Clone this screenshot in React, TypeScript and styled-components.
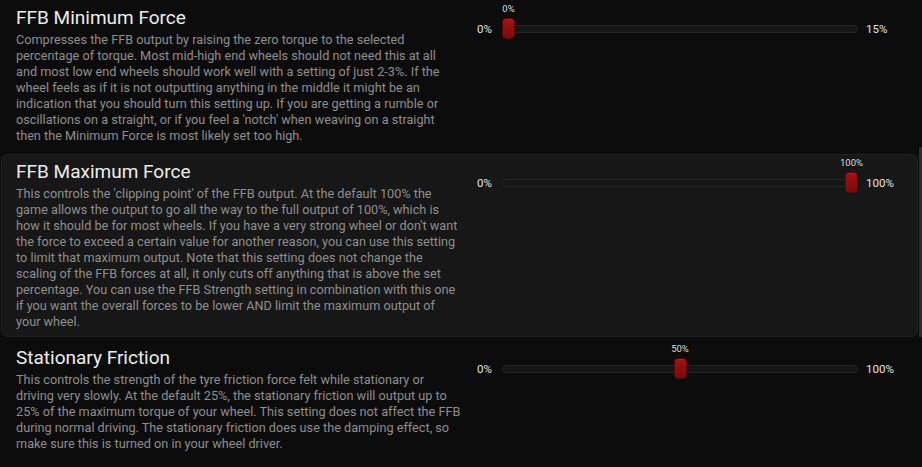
import React from "react";
import styled, { createGlobalStyle } from "styled-components";

const GlobalStyle = createGlobalStyle`
  html, body { margin: 0; padding: 0; background: #0c0c0c; }
  body { font-family: Roboto, "Liberation Sans", sans-serif; }
  #root { height: 467px; overflow: hidden; }
`;

const Page = styled.div`
  display: flex;
  height: 467px;
  background: #0c0c0c;
`;

const List = styled.div`
  width: 918px;
  display: flex;
  flex-direction: column;
`;

const ScrollTrack = styled.div`
  width: 3px;
  margin-left: 1px;
  display: flex;
  flex-direction: column;
`;

const ScrollThumb = styled.div`
  margin-top: 147px;
  height: 190px;
  background: #2c2c2c;
  border-radius: 1px;
`;

const Section = styled.div<{ $active?: boolean; $gap: number }>`
  display: grid;
  grid-template-columns: 447px 1fr;
  column-gap: 14px;
  align-items: start;
  padding: 6px 0 ${(p) => (p.$active ? "6px" : "8px")} 14px;
  margin: ${(p) => p.$gap}px 0 0 1px;
  border: 1px solid ${(p) => (p.$active ? "#212121" : "transparent")};
  border-radius: 7px;
  background: ${(p) => (p.$active ? "#171717" : "transparent")};
`;

const TextCol = styled.div`
  display: flex;
  flex-direction: column;
  white-space: nowrap;
`;

const Title = styled.h2`
  margin: 0;
  font-family: Roboto, "Liberation Sans", sans-serif;
  font-weight: 400;
  font-size: 19px;
  line-height: 22px;
  color: #ececec;
`;

const Body = styled.p`
  margin: 3px 0 0;
  font-size: 12.7px;
  line-height: 16px;
  color: #8e8e8e;
`;

const SliderRow = styled.div`
  display: flex;
  align-items: center;
  height: 21px;
  margin-top: 11px;
`;

const EndLabel = styled.span<{ $left?: boolean }>`
  font-size: 11.5px;
  color: #e4e4e4;
  width: ${(p) => (p.$left ? "25px" : "auto")};
  margin-left: ${(p) => (p.$left ? "0" : "8px")};
`;

const Track = styled.div`
  position: relative;
  width: 356px;
  height: 21px;
  display: flex;
  align-items: center;
`;

const Rail = styled.div`
  flex: 1;
  height: 6px;
  background: #161616;
  border: 1px solid #262626;
  border-radius: 4px;
`;

const Thumb = styled.div`
  position: absolute;
  top: 0;
  width: 13px;
  height: 21px;
  box-sizing: border-box;
  border-radius: 4px;
  background: linear-gradient(#a01212, #7e0a0a);
  border: 1px solid #5e0707;
  box-shadow: inset 0 1px 0 rgba(255, 120, 120, 0.18);
`;

const ValueLabel = styled.span`
  position: absolute;
  bottom: 24px;
  left: 50%;
  transform: translateX(-50%);
  font-size: 9.5px;
  line-height: 10px;
  color: #dcdcdc;
  white-space: nowrap;
`;

type Setting = {
  title: string;
  lines: string[];
  value: number;
  max: string;
  gap: number;
  active?: boolean;
};

const settings: Setting[] = [
  {
    title: "FFB Minimum Force",
    value: 0,
    max: "15%",
    gap: 0,
    lines: [
      "Compresses the FFB output by raising the zero torque to the selected",
      "percentage of torque. Most mid-high end wheels should not need this at all",
      "and most low end wheels should work well with a setting of just 2-3%. If the",
      "wheel feels as if it is not outputting anything in the middle it might be an",
      "indication that you should turn this setting up. If you are getting a rumble or",
      "oscillations on a straight, or if you feel a 'notch' when weaving on a straight",
      "then the Minimum Force is most likely set too high.",
    ],
  },
  {
    title: "FFB Maximum Force",
    value: 100,
    max: "100%",
    gap: 1,
    active: true,
    lines: [
      "This controls the 'clipping point' of the FFB output. At the default 100% the",
      "game allows the output to go all the way to the full output of 100%, which is",
      "how it should be for most wheels. If you have a very strong wheel or don't want",
      "the force to exceed a certain value for another reason, you can use this setting",
      "to limit that maximum output. Note that this setting does not change the",
      "scaling of the FFB forces at all, it only cuts off anything that is above the set",
      "percentage. You can use the FFB Strength setting in combination with this one",
      "if you want the overall forces to be lower AND limit the maximum output of",
      "your wheel.",
    ],
  },
  {
    title: "Stationary Friction",
    value: 50,
    max: "100%",
    gap: 3,
    lines: [
      "This controls the strength of the tyre friction force felt while stationary or",
      "driving very slowly. At the default 25%, the stationary friction will output up to",
      "25% of the maximum torque of your wheel. This setting does not affect the FFB",
      "during normal driving. The stationary friction does use the damping effect, so",
      "make sure this is turned on in your wheel driver.",
    ],
  },
];

function Slider({ value, max }: { value: number; max: string }) {
  const left = (value / 100) * (356 - 13);
  return (
    <SliderRow>
      <EndLabel $left>0%</EndLabel>
      <Track>
        <Rail />
        <Thumb style={{ left }}>
          <ValueLabel>{value}%</ValueLabel>
        </Thumb>
      </Track>
      <EndLabel>{max}</EndLabel>
    </SliderRow>
  );
}

export default function App() {
  return (
    <Page>
      <GlobalStyle />
      <List>
        {settings.map((s) => (
          <Section key={s.title} $active={s.active} $gap={s.gap}>
            <TextCol>
              <Title>{s.title}</Title>
              <Body>
                {s.lines.map((l, i) => (
                  <React.Fragment key={i}>
                    {l}
                    {i < s.lines.length - 1 && <br />}
                  </React.Fragment>
                ))}
              </Body>
            </TextCol>
            <Slider value={s.value} max={s.max} />
          </Section>
        ))}
      </List>
      <ScrollTrack>
        <ScrollThumb />
      </ScrollTrack>
    </Page>
  );
}
